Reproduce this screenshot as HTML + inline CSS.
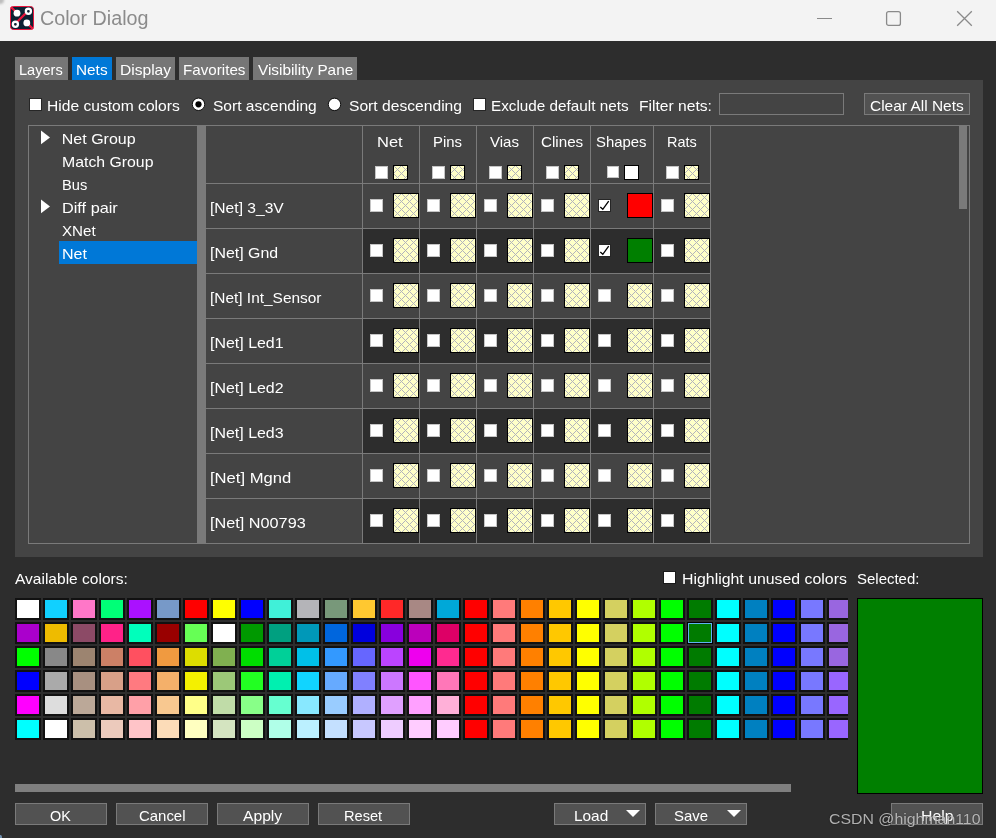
<!DOCTYPE html><html><head><meta charset="utf-8"><style>
*{margin:0;padding:0;box-sizing:border-box}
html,body{width:996px;height:838px;overflow:hidden;background:#2d2d2d;font-family:"Liberation Sans",sans-serif;color:#fff}
.a{position:absolute}
.t{position:absolute;white-space:nowrap;line-height:1;color:#fff;transform-origin:0 0}
.cb{position:absolute;width:12px;height:12px;background:#fff;border:1px solid #c4c4c4}
.hl{position:absolute;background:#7a7a7a}
.ps{position:absolute;width:26px;height:22px;border:2px solid #111}
.btn{position:absolute;height:22px;background:#525252;border:1px solid #7a7a7a}
</style></head><body>
<svg width="0" height="0" style="position:absolute"><defs><pattern id="hp" patternUnits="userSpaceOnUse" x="0" y="0" width="8" height="8"><path d="M0 0h1v1h-1zM1 1h1v1h-1zM1 7h1v1h-1zM2 2h1v1h-1zM2 6h1v1h-1zM3 3h1v1h-1zM3 5h1v1h-1zM4 4h1v1h-1zM5 3h1v1h-1zM5 5h1v1h-1zM6 2h1v1h-1zM6 6h1v1h-1zM7 1h1v1h-1zM7 7h1v1h-1z" fill="#b2b3bb"/></pattern></defs></svg>
<div class="a" style="left:0;top:0;width:996px;height:41px;background:#f3f3f3"></div>
<svg class="a" style="left:10px;top:6px" width="24" height="24" viewBox="0 0 24 24">
<rect x="0.5" y="0.5" width="23" height="23" rx="3" fill="#0d2233" stroke="#e8143c" stroke-width="1"/>
<path d="M1 1L7 7M17 6L6 17M17 17L23 23" stroke="#e8143c" stroke-width="2.4"/>
<circle cx="7" cy="7.2" r="3.4" fill="#fff"/>
<circle cx="18.4" cy="5.3" r="2.55" fill="#0d2233" stroke="#fff" stroke-width="2.3"/>
<circle cx="5.4" cy="18.3" r="2.55" fill="#0d2233" stroke="#fff" stroke-width="2.3"/>
<circle cx="16.8" cy="16.9" r="3.4" fill="#fff"/>
</svg>
<div class="a" style="left:817px;top:18px;width:15px;height:1px;background:#8a8a8a"></div>
<svg class="a" style="left:884px;top:9px" width="19" height="19" viewBox="0 0 19 19"><rect x="2.6" y="2.6" width="13.8" height="13.8" rx="2" fill="none" stroke="#8a8a8a" stroke-width="1.3"/></svg>
<svg class="a" style="left:956px;top:10px" width="17" height="17" viewBox="0 0 17 17"><path d="M1.2 1.2L15.8 15.8M15.8 1.2L1.2 15.8" stroke="#8a8a8a" stroke-width="1.3"/></svg>
<div class="a" style="left:15px;top:57px;width:53px;height:23px;background:#767676"></div>
<div class="a" style="left:72px;top:57px;width:40px;height:23px;background:#0078d7"></div>
<div class="a" style="left:116px;top:57px;width:59px;height:23px;background:#767676"></div>
<div class="a" style="left:179px;top:57px;width:70px;height:23px;background:#767676"></div>
<div class="a" style="left:253px;top:57px;width:104px;height:23px;background:#767676"></div>
<div class="a" style="left:-4px;top:-4px;width:8px;height:8px;border-radius:50%;background:#bdbdbd;filter:blur(0.8px)"></div>
<div class="a" style="left:-1.5px;top:835px;width:3px;height:6px;border-radius:50%;background:#7090b0"></div>
<div class="a" style="left:15px;top:80px;width:968px;height:477px;background:#444444"></div>
<div class="a" style="left:29px;top:98px;width:13px;height:13px;background:#fff;border:1px solid #262626"></div>
<svg class="a" style="left:190px;top:96px" width="17" height="17" viewBox="0 0 17 17"><circle cx="8.5" cy="8.3" r="6.2" fill="#fff" stroke="#000" stroke-width="0.9"/><circle cx="8.5" cy="8.3" r="3.1" fill="#000"/></svg>
<svg class="a" style="left:326px;top:96px" width="17" height="17" viewBox="0 0 17 17"><circle cx="8.5" cy="8.4" r="6.2" fill="#fff" stroke="#000" stroke-width="0.9"/></svg>
<div class="a" style="left:473px;top:98px;width:13px;height:13px;background:#fff;border:1px solid #262626"></div>
<div class="a" style="left:719px;top:93px;width:125px;height:22px;border:1px solid #7a7a7a;background:#444"></div>
<div class="btn" style="left:864px;top:93px;width:106px"></div>
<div class="a" style="left:28px;top:125px;width:942px;height:419px;border:1px solid #7a7a7a"></div>
<div class="a" style="left:59px;top:241px;width:138px;height:23px;background:#0078d7"></div>
<svg class="a" style="left:40px;top:126px" width="12" height="22" viewBox="0 0 12 22"><path d="M1 4.6L10 11.4L1 18.2z" fill="#fff"/></svg>
<svg class="a" style="left:40px;top:195px" width="12" height="22" viewBox="0 0 12 22"><path d="M1 4.6L10 11.4L1 18.2z" fill="#fff"/></svg>
<div class="a" style="left:197px;top:126px;width:9px;height:417px;background:#7a7a7a"></div>
<div class="a" style="left:363px;top:229px;width:347px;height:44px;background:#2d2d2d"></div>
<div class="a" style="left:363px;top:319px;width:347px;height:44px;background:#2d2d2d"></div>
<div class="a" style="left:363px;top:409px;width:347px;height:44px;background:#2d2d2d"></div>
<div class="a" style="left:363px;top:499px;width:347px;height:44px;background:#2d2d2d"></div>
<div class="hl" style="left:206px;top:183px;width:504px;height:1px"></div>
<div class="hl" style="left:206px;top:228px;width:504px;height:1px"></div>
<div class="hl" style="left:206px;top:273px;width:504px;height:1px"></div>
<div class="hl" style="left:206px;top:318px;width:504px;height:1px"></div>
<div class="hl" style="left:206px;top:363px;width:504px;height:1px"></div>
<div class="hl" style="left:206px;top:408px;width:504px;height:1px"></div>
<div class="hl" style="left:206px;top:453px;width:504px;height:1px"></div>
<div class="hl" style="left:206px;top:498px;width:504px;height:1px"></div>
<div class="hl" style="left:362px;top:126px;width:1px;height:417px"></div>
<div class="hl" style="left:419px;top:126px;width:1px;height:417px"></div>
<div class="hl" style="left:476px;top:126px;width:1px;height:417px"></div>
<div class="hl" style="left:533px;top:126px;width:1px;height:417px"></div>
<div class="hl" style="left:590px;top:126px;width:1px;height:417px"></div>
<div class="hl" style="left:653px;top:126px;width:1px;height:417px"></div>
<div class="hl" style="left:710px;top:126px;width:1px;height:417px"></div>
<div class="cb" style="left:375px;top:166px;width:13px;height:13px"></div>
<svg class="a" style="left:393px;top:165px" width="15" height="15" shape-rendering="crispEdges"><rect width="15" height="15" fill="#ffffc8"/><rect width="15" height="15" fill="url(#hp)"/><rect x="0.5" y="0.5" width="14" height="14" fill="none" stroke="#000"/></svg>
<div class="cb" style="left:432px;top:166px;width:13px;height:13px"></div>
<svg class="a" style="left:450px;top:165px" width="15" height="15" shape-rendering="crispEdges"><rect width="15" height="15" fill="#ffffc8"/><rect width="15" height="15" fill="url(#hp)"/><rect x="0.5" y="0.5" width="14" height="14" fill="none" stroke="#000"/></svg>
<div class="cb" style="left:489px;top:166px;width:13px;height:13px"></div>
<svg class="a" style="left:507px;top:165px" width="15" height="15" shape-rendering="crispEdges"><rect width="15" height="15" fill="#ffffc8"/><rect width="15" height="15" fill="url(#hp)"/><rect x="0.5" y="0.5" width="14" height="14" fill="none" stroke="#000"/></svg>
<div class="cb" style="left:546px;top:166px;width:13px;height:13px"></div>
<svg class="a" style="left:564px;top:165px" width="15" height="15" shape-rendering="crispEdges"><rect width="15" height="15" fill="#ffffc8"/><rect width="15" height="15" fill="url(#hp)"/><rect x="0.5" y="0.5" width="14" height="14" fill="none" stroke="#000"/></svg>
<div class="cb" style="left:607px;top:166px;width:12px;height:12px"></div>
<div class="a" style="left:624px;top:165px;width:15px;height:15px;border:1px solid #000;background:#fff"></div>
<div class="cb" style="left:666px;top:166px;width:13px;height:13px"></div>
<svg class="a" style="left:684px;top:165px" width="15" height="15" shape-rendering="crispEdges"><rect width="15" height="15" fill="#ffffc8"/><rect width="15" height="15" fill="url(#hp)"/><rect x="0.5" y="0.5" width="14" height="14" fill="none" stroke="#000"/></svg>
<div class="cb" style="left:370px;top:199px;width:13px;height:13px"></div>
<svg class="a" style="left:393px;top:193px" width="26" height="25" shape-rendering="crispEdges"><rect width="26" height="25" fill="#ffffc8"/><rect width="26" height="25" fill="url(#hp)"/><rect x="0.5" y="0.5" width="25" height="24" fill="none" stroke="#000"/></svg>
<div class="cb" style="left:427px;top:199px;width:13px;height:13px"></div>
<svg class="a" style="left:450px;top:193px" width="26" height="25" shape-rendering="crispEdges"><rect width="26" height="25" fill="#ffffc8"/><rect width="26" height="25" fill="url(#hp)"/><rect x="0.5" y="0.5" width="25" height="24" fill="none" stroke="#000"/></svg>
<div class="cb" style="left:484px;top:199px;width:13px;height:13px"></div>
<svg class="a" style="left:507px;top:193px" width="26" height="25" shape-rendering="crispEdges"><rect width="26" height="25" fill="#ffffc8"/><rect width="26" height="25" fill="url(#hp)"/><rect x="0.5" y="0.5" width="25" height="24" fill="none" stroke="#000"/></svg>
<div class="cb" style="left:541px;top:199px;width:13px;height:13px"></div>
<svg class="a" style="left:564px;top:193px" width="26" height="25" shape-rendering="crispEdges"><rect width="26" height="25" fill="#ffffc8"/><rect width="26" height="25" fill="url(#hp)"/><rect x="0.5" y="0.5" width="25" height="24" fill="none" stroke="#000"/></svg>
<div class="a" style="left:598px;top:199px;width:13px;height:13px;background:#fff;border:1px solid #262626"></div>
<svg class="a" style="left:598px;top:199px" width="12" height="13" viewBox="0 0 12 13"><path d="M2.3 8.1L4.8 10.3L10.7 2.2" fill="none" stroke="#000" stroke-width="1.35"/></svg>
<div class="a" style="left:627px;top:193px;width:26px;height:25px;border:1px solid #000;background:#ff0000"></div>
<div class="cb" style="left:661px;top:199px;width:13px;height:13px"></div>
<svg class="a" style="left:684px;top:193px" width="26" height="25" shape-rendering="crispEdges"><rect width="26" height="25" fill="#ffffc8"/><rect width="26" height="25" fill="url(#hp)"/><rect x="0.5" y="0.5" width="25" height="24" fill="none" stroke="#000"/></svg>
<div class="cb" style="left:370px;top:244px;width:13px;height:13px"></div>
<svg class="a" style="left:393px;top:238px" width="26" height="25" shape-rendering="crispEdges"><rect width="26" height="25" fill="#ffffc8"/><rect width="26" height="25" fill="url(#hp)"/><rect x="0.5" y="0.5" width="25" height="24" fill="none" stroke="#000"/></svg>
<div class="cb" style="left:427px;top:244px;width:13px;height:13px"></div>
<svg class="a" style="left:450px;top:238px" width="26" height="25" shape-rendering="crispEdges"><rect width="26" height="25" fill="#ffffc8"/><rect width="26" height="25" fill="url(#hp)"/><rect x="0.5" y="0.5" width="25" height="24" fill="none" stroke="#000"/></svg>
<div class="cb" style="left:484px;top:244px;width:13px;height:13px"></div>
<svg class="a" style="left:507px;top:238px" width="26" height="25" shape-rendering="crispEdges"><rect width="26" height="25" fill="#ffffc8"/><rect width="26" height="25" fill="url(#hp)"/><rect x="0.5" y="0.5" width="25" height="24" fill="none" stroke="#000"/></svg>
<div class="cb" style="left:541px;top:244px;width:13px;height:13px"></div>
<svg class="a" style="left:564px;top:238px" width="26" height="25" shape-rendering="crispEdges"><rect width="26" height="25" fill="#ffffc8"/><rect width="26" height="25" fill="url(#hp)"/><rect x="0.5" y="0.5" width="25" height="24" fill="none" stroke="#000"/></svg>
<div class="a" style="left:598px;top:244px;width:13px;height:13px;background:#fff;border:1px solid #262626"></div>
<svg class="a" style="left:598px;top:244px" width="12" height="13" viewBox="0 0 12 13"><path d="M2.3 8.1L4.8 10.3L10.7 2.2" fill="none" stroke="#000" stroke-width="1.35"/></svg>
<div class="a" style="left:627px;top:238px;width:26px;height:25px;border:1px solid #000;background:#007f00"></div>
<div class="cb" style="left:661px;top:244px;width:13px;height:13px"></div>
<svg class="a" style="left:684px;top:238px" width="26" height="25" shape-rendering="crispEdges"><rect width="26" height="25" fill="#ffffc8"/><rect width="26" height="25" fill="url(#hp)"/><rect x="0.5" y="0.5" width="25" height="24" fill="none" stroke="#000"/></svg>
<div class="cb" style="left:370px;top:289px;width:13px;height:13px"></div>
<svg class="a" style="left:393px;top:283px" width="26" height="25" shape-rendering="crispEdges"><rect width="26" height="25" fill="#ffffc8"/><rect width="26" height="25" fill="url(#hp)"/><rect x="0.5" y="0.5" width="25" height="24" fill="none" stroke="#000"/></svg>
<div class="cb" style="left:427px;top:289px;width:13px;height:13px"></div>
<svg class="a" style="left:450px;top:283px" width="26" height="25" shape-rendering="crispEdges"><rect width="26" height="25" fill="#ffffc8"/><rect width="26" height="25" fill="url(#hp)"/><rect x="0.5" y="0.5" width="25" height="24" fill="none" stroke="#000"/></svg>
<div class="cb" style="left:484px;top:289px;width:13px;height:13px"></div>
<svg class="a" style="left:507px;top:283px" width="26" height="25" shape-rendering="crispEdges"><rect width="26" height="25" fill="#ffffc8"/><rect width="26" height="25" fill="url(#hp)"/><rect x="0.5" y="0.5" width="25" height="24" fill="none" stroke="#000"/></svg>
<div class="cb" style="left:541px;top:289px;width:13px;height:13px"></div>
<svg class="a" style="left:564px;top:283px" width="26" height="25" shape-rendering="crispEdges"><rect width="26" height="25" fill="#ffffc8"/><rect width="26" height="25" fill="url(#hp)"/><rect x="0.5" y="0.5" width="25" height="24" fill="none" stroke="#000"/></svg>
<div class="cb" style="left:598px;top:289px;width:13px;height:13px"></div>
<svg class="a" style="left:627px;top:283px" width="26" height="25" shape-rendering="crispEdges"><rect width="26" height="25" fill="#ffffc8"/><rect width="26" height="25" fill="url(#hp)"/><rect x="0.5" y="0.5" width="25" height="24" fill="none" stroke="#000"/></svg>
<div class="cb" style="left:661px;top:289px;width:13px;height:13px"></div>
<svg class="a" style="left:684px;top:283px" width="26" height="25" shape-rendering="crispEdges"><rect width="26" height="25" fill="#ffffc8"/><rect width="26" height="25" fill="url(#hp)"/><rect x="0.5" y="0.5" width="25" height="24" fill="none" stroke="#000"/></svg>
<div class="cb" style="left:370px;top:334px;width:13px;height:13px"></div>
<svg class="a" style="left:393px;top:328px" width="26" height="25" shape-rendering="crispEdges"><rect width="26" height="25" fill="#ffffc8"/><rect width="26" height="25" fill="url(#hp)"/><rect x="0.5" y="0.5" width="25" height="24" fill="none" stroke="#000"/></svg>
<div class="cb" style="left:427px;top:334px;width:13px;height:13px"></div>
<svg class="a" style="left:450px;top:328px" width="26" height="25" shape-rendering="crispEdges"><rect width="26" height="25" fill="#ffffc8"/><rect width="26" height="25" fill="url(#hp)"/><rect x="0.5" y="0.5" width="25" height="24" fill="none" stroke="#000"/></svg>
<div class="cb" style="left:484px;top:334px;width:13px;height:13px"></div>
<svg class="a" style="left:507px;top:328px" width="26" height="25" shape-rendering="crispEdges"><rect width="26" height="25" fill="#ffffc8"/><rect width="26" height="25" fill="url(#hp)"/><rect x="0.5" y="0.5" width="25" height="24" fill="none" stroke="#000"/></svg>
<div class="cb" style="left:541px;top:334px;width:13px;height:13px"></div>
<svg class="a" style="left:564px;top:328px" width="26" height="25" shape-rendering="crispEdges"><rect width="26" height="25" fill="#ffffc8"/><rect width="26" height="25" fill="url(#hp)"/><rect x="0.5" y="0.5" width="25" height="24" fill="none" stroke="#000"/></svg>
<div class="cb" style="left:598px;top:334px;width:13px;height:13px"></div>
<svg class="a" style="left:627px;top:328px" width="26" height="25" shape-rendering="crispEdges"><rect width="26" height="25" fill="#ffffc8"/><rect width="26" height="25" fill="url(#hp)"/><rect x="0.5" y="0.5" width="25" height="24" fill="none" stroke="#000"/></svg>
<div class="cb" style="left:661px;top:334px;width:13px;height:13px"></div>
<svg class="a" style="left:684px;top:328px" width="26" height="25" shape-rendering="crispEdges"><rect width="26" height="25" fill="#ffffc8"/><rect width="26" height="25" fill="url(#hp)"/><rect x="0.5" y="0.5" width="25" height="24" fill="none" stroke="#000"/></svg>
<div class="cb" style="left:370px;top:379px;width:13px;height:13px"></div>
<svg class="a" style="left:393px;top:373px" width="26" height="25" shape-rendering="crispEdges"><rect width="26" height="25" fill="#ffffc8"/><rect width="26" height="25" fill="url(#hp)"/><rect x="0.5" y="0.5" width="25" height="24" fill="none" stroke="#000"/></svg>
<div class="cb" style="left:427px;top:379px;width:13px;height:13px"></div>
<svg class="a" style="left:450px;top:373px" width="26" height="25" shape-rendering="crispEdges"><rect width="26" height="25" fill="#ffffc8"/><rect width="26" height="25" fill="url(#hp)"/><rect x="0.5" y="0.5" width="25" height="24" fill="none" stroke="#000"/></svg>
<div class="cb" style="left:484px;top:379px;width:13px;height:13px"></div>
<svg class="a" style="left:507px;top:373px" width="26" height="25" shape-rendering="crispEdges"><rect width="26" height="25" fill="#ffffc8"/><rect width="26" height="25" fill="url(#hp)"/><rect x="0.5" y="0.5" width="25" height="24" fill="none" stroke="#000"/></svg>
<div class="cb" style="left:541px;top:379px;width:13px;height:13px"></div>
<svg class="a" style="left:564px;top:373px" width="26" height="25" shape-rendering="crispEdges"><rect width="26" height="25" fill="#ffffc8"/><rect width="26" height="25" fill="url(#hp)"/><rect x="0.5" y="0.5" width="25" height="24" fill="none" stroke="#000"/></svg>
<div class="cb" style="left:598px;top:379px;width:13px;height:13px"></div>
<svg class="a" style="left:627px;top:373px" width="26" height="25" shape-rendering="crispEdges"><rect width="26" height="25" fill="#ffffc8"/><rect width="26" height="25" fill="url(#hp)"/><rect x="0.5" y="0.5" width="25" height="24" fill="none" stroke="#000"/></svg>
<div class="cb" style="left:661px;top:379px;width:13px;height:13px"></div>
<svg class="a" style="left:684px;top:373px" width="26" height="25" shape-rendering="crispEdges"><rect width="26" height="25" fill="#ffffc8"/><rect width="26" height="25" fill="url(#hp)"/><rect x="0.5" y="0.5" width="25" height="24" fill="none" stroke="#000"/></svg>
<div class="cb" style="left:370px;top:424px;width:13px;height:13px"></div>
<svg class="a" style="left:393px;top:418px" width="26" height="25" shape-rendering="crispEdges"><rect width="26" height="25" fill="#ffffc8"/><rect width="26" height="25" fill="url(#hp)"/><rect x="0.5" y="0.5" width="25" height="24" fill="none" stroke="#000"/></svg>
<div class="cb" style="left:427px;top:424px;width:13px;height:13px"></div>
<svg class="a" style="left:450px;top:418px" width="26" height="25" shape-rendering="crispEdges"><rect width="26" height="25" fill="#ffffc8"/><rect width="26" height="25" fill="url(#hp)"/><rect x="0.5" y="0.5" width="25" height="24" fill="none" stroke="#000"/></svg>
<div class="cb" style="left:484px;top:424px;width:13px;height:13px"></div>
<svg class="a" style="left:507px;top:418px" width="26" height="25" shape-rendering="crispEdges"><rect width="26" height="25" fill="#ffffc8"/><rect width="26" height="25" fill="url(#hp)"/><rect x="0.5" y="0.5" width="25" height="24" fill="none" stroke="#000"/></svg>
<div class="cb" style="left:541px;top:424px;width:13px;height:13px"></div>
<svg class="a" style="left:564px;top:418px" width="26" height="25" shape-rendering="crispEdges"><rect width="26" height="25" fill="#ffffc8"/><rect width="26" height="25" fill="url(#hp)"/><rect x="0.5" y="0.5" width="25" height="24" fill="none" stroke="#000"/></svg>
<div class="cb" style="left:598px;top:424px;width:13px;height:13px"></div>
<svg class="a" style="left:627px;top:418px" width="26" height="25" shape-rendering="crispEdges"><rect width="26" height="25" fill="#ffffc8"/><rect width="26" height="25" fill="url(#hp)"/><rect x="0.5" y="0.5" width="25" height="24" fill="none" stroke="#000"/></svg>
<div class="cb" style="left:661px;top:424px;width:13px;height:13px"></div>
<svg class="a" style="left:684px;top:418px" width="26" height="25" shape-rendering="crispEdges"><rect width="26" height="25" fill="#ffffc8"/><rect width="26" height="25" fill="url(#hp)"/><rect x="0.5" y="0.5" width="25" height="24" fill="none" stroke="#000"/></svg>
<div class="cb" style="left:370px;top:469px;width:13px;height:13px"></div>
<svg class="a" style="left:393px;top:463px" width="26" height="25" shape-rendering="crispEdges"><rect width="26" height="25" fill="#ffffc8"/><rect width="26" height="25" fill="url(#hp)"/><rect x="0.5" y="0.5" width="25" height="24" fill="none" stroke="#000"/></svg>
<div class="cb" style="left:427px;top:469px;width:13px;height:13px"></div>
<svg class="a" style="left:450px;top:463px" width="26" height="25" shape-rendering="crispEdges"><rect width="26" height="25" fill="#ffffc8"/><rect width="26" height="25" fill="url(#hp)"/><rect x="0.5" y="0.5" width="25" height="24" fill="none" stroke="#000"/></svg>
<div class="cb" style="left:484px;top:469px;width:13px;height:13px"></div>
<svg class="a" style="left:507px;top:463px" width="26" height="25" shape-rendering="crispEdges"><rect width="26" height="25" fill="#ffffc8"/><rect width="26" height="25" fill="url(#hp)"/><rect x="0.5" y="0.5" width="25" height="24" fill="none" stroke="#000"/></svg>
<div class="cb" style="left:541px;top:469px;width:13px;height:13px"></div>
<svg class="a" style="left:564px;top:463px" width="26" height="25" shape-rendering="crispEdges"><rect width="26" height="25" fill="#ffffc8"/><rect width="26" height="25" fill="url(#hp)"/><rect x="0.5" y="0.5" width="25" height="24" fill="none" stroke="#000"/></svg>
<div class="cb" style="left:598px;top:469px;width:13px;height:13px"></div>
<svg class="a" style="left:627px;top:463px" width="26" height="25" shape-rendering="crispEdges"><rect width="26" height="25" fill="#ffffc8"/><rect width="26" height="25" fill="url(#hp)"/><rect x="0.5" y="0.5" width="25" height="24" fill="none" stroke="#000"/></svg>
<div class="cb" style="left:661px;top:469px;width:13px;height:13px"></div>
<svg class="a" style="left:684px;top:463px" width="26" height="25" shape-rendering="crispEdges"><rect width="26" height="25" fill="#ffffc8"/><rect width="26" height="25" fill="url(#hp)"/><rect x="0.5" y="0.5" width="25" height="24" fill="none" stroke="#000"/></svg>
<div class="cb" style="left:370px;top:514px;width:13px;height:13px"></div>
<svg class="a" style="left:393px;top:508px" width="26" height="25" shape-rendering="crispEdges"><rect width="26" height="25" fill="#ffffc8"/><rect width="26" height="25" fill="url(#hp)"/><rect x="0.5" y="0.5" width="25" height="24" fill="none" stroke="#000"/></svg>
<div class="cb" style="left:427px;top:514px;width:13px;height:13px"></div>
<svg class="a" style="left:450px;top:508px" width="26" height="25" shape-rendering="crispEdges"><rect width="26" height="25" fill="#ffffc8"/><rect width="26" height="25" fill="url(#hp)"/><rect x="0.5" y="0.5" width="25" height="24" fill="none" stroke="#000"/></svg>
<div class="cb" style="left:484px;top:514px;width:13px;height:13px"></div>
<svg class="a" style="left:507px;top:508px" width="26" height="25" shape-rendering="crispEdges"><rect width="26" height="25" fill="#ffffc8"/><rect width="26" height="25" fill="url(#hp)"/><rect x="0.5" y="0.5" width="25" height="24" fill="none" stroke="#000"/></svg>
<div class="cb" style="left:541px;top:514px;width:13px;height:13px"></div>
<svg class="a" style="left:564px;top:508px" width="26" height="25" shape-rendering="crispEdges"><rect width="26" height="25" fill="#ffffc8"/><rect width="26" height="25" fill="url(#hp)"/><rect x="0.5" y="0.5" width="25" height="24" fill="none" stroke="#000"/></svg>
<div class="cb" style="left:598px;top:514px;width:13px;height:13px"></div>
<svg class="a" style="left:627px;top:508px" width="26" height="25" shape-rendering="crispEdges"><rect width="26" height="25" fill="#ffffc8"/><rect width="26" height="25" fill="url(#hp)"/><rect x="0.5" y="0.5" width="25" height="24" fill="none" stroke="#000"/></svg>
<div class="cb" style="left:661px;top:514px;width:13px;height:13px"></div>
<svg class="a" style="left:684px;top:508px" width="26" height="25" shape-rendering="crispEdges"><rect width="26" height="25" fill="#ffffc8"/><rect width="26" height="25" fill="url(#hp)"/><rect x="0.5" y="0.5" width="25" height="24" fill="none" stroke="#000"/></svg>
<div class="a" style="left:959px;top:126px;width:8px;height:83px;background:#7a7a7a"></div>
<div class="a" style="left:663px;top:571px;width:13px;height:13px;background:#fff;border:1px solid #1a1a1a"></div>
<div class="a" style="left:15px;top:598px;width:833px;height:144px;overflow:hidden">
<div class="ps" style="left:0px;top:0px;background:#ffffff"></div>
<div class="ps" style="left:28px;top:0px;background:#11d0ff"></div>
<div class="ps" style="left:56px;top:0px;background:#ff77c8"></div>
<div class="ps" style="left:84px;top:0px;background:#00ff77"></div>
<div class="ps" style="left:112px;top:0px;background:#aa11ff"></div>
<div class="ps" style="left:140px;top:0px;background:#7799c8"></div>
<div class="ps" style="left:168px;top:0px;background:#ff0000"></div>
<div class="ps" style="left:196px;top:0px;background:#ffff00"></div>
<div class="ps" style="left:224px;top:0px;background:#0000ff"></div>
<div class="ps" style="left:252px;top:0px;background:#40f0d8"></div>
<div class="ps" style="left:280px;top:0px;background:#b4b4b8"></div>
<div class="ps" style="left:308px;top:0px;background:#78987a"></div>
<div class="ps" style="left:336px;top:0px;background:#ffc830"></div>
<div class="ps" style="left:364px;top:0px;background:#ff2828"></div>
<div class="ps" style="left:392px;top:0px;background:#a88884"></div>
<div class="ps" style="left:420px;top:0px;background:#00a8d8"></div>
<div class="ps" style="left:448px;top:0px;background:#ff0000"></div>
<div class="ps" style="left:476px;top:0px;background:#ff7a7a"></div>
<div class="ps" style="left:504px;top:0px;background:#ff8000"></div>
<div class="ps" style="left:532px;top:0px;background:#ffc800"></div>
<div class="ps" style="left:560px;top:0px;background:#ffff00"></div>
<div class="ps" style="left:588px;top:0px;background:#d4d060"></div>
<div class="ps" style="left:616px;top:0px;background:#b0ff00"></div>
<div class="ps" style="left:644px;top:0px;background:#00ff00"></div>
<div class="ps" style="left:672px;top:0px;background:#007b00"></div>
<div class="ps" style="left:700px;top:0px;background:#00ffff"></div>
<div class="ps" style="left:728px;top:0px;background:#0080c0"></div>
<div class="ps" style="left:756px;top:0px;background:#0000ff"></div>
<div class="ps" style="left:784px;top:0px;background:#7878ff"></div>
<div class="ps" style="left:812px;top:0px;background:#9966e0"></div>
<div class="ps" style="left:0px;top:24px;background:#aa00cc"></div>
<div class="ps" style="left:28px;top:24px;background:#eebb00"></div>
<div class="ps" style="left:56px;top:24px;background:#8c4a66"></div>
<div class="ps" style="left:84px;top:24px;background:#ff2288"></div>
<div class="ps" style="left:112px;top:24px;background:#00ffbb"></div>
<div class="ps" style="left:140px;top:24px;background:#990000"></div>
<div class="ps" style="left:168px;top:24px;background:#66ff55"></div>
<div class="ps" style="left:196px;top:24px;background:#ffffff"></div>
<div class="ps" style="left:224px;top:24px;background:#009900"></div>
<div class="ps" style="left:252px;top:24px;background:#00a080"></div>
<div class="ps" style="left:280px;top:24px;background:#0098b8"></div>
<div class="ps" style="left:308px;top:24px;background:#0066dd"></div>
<div class="ps" style="left:336px;top:24px;background:#0000dd"></div>
<div class="ps" style="left:364px;top:24px;background:#8800dd"></div>
<div class="ps" style="left:392px;top:24px;background:#bb00bb"></div>
<div class="ps" style="left:420px;top:24px;background:#dd0066"></div>
<div class="ps" style="left:448px;top:24px;background:#ff0000"></div>
<div class="ps" style="left:476px;top:24px;background:#ff7a7a"></div>
<div class="ps" style="left:504px;top:24px;background:#ff8000"></div>
<div class="ps" style="left:532px;top:24px;background:#ffc800"></div>
<div class="ps" style="left:560px;top:24px;background:#ffff00"></div>
<div class="ps" style="left:588px;top:24px;background:#d4d060"></div>
<div class="ps" style="left:616px;top:24px;background:#b0ff00"></div>
<div class="ps" style="left:644px;top:24px;background:#00ff00"></div>
<div class="ps" style="left:672px;top:24px;background:#007b00;border:1px solid #000;box-shadow:inset 0 0 0 1px #5eb2f0"></div>
<div class="ps" style="left:700px;top:24px;background:#00ffff"></div>
<div class="ps" style="left:728px;top:24px;background:#0080c0"></div>
<div class="ps" style="left:756px;top:24px;background:#0000ff"></div>
<div class="ps" style="left:784px;top:24px;background:#7878ff"></div>
<div class="ps" style="left:812px;top:24px;background:#9966e0"></div>
<div class="ps" style="left:0px;top:48px;background:#00ff00"></div>
<div class="ps" style="left:28px;top:48px;background:#888888"></div>
<div class="ps" style="left:56px;top:48px;background:#9c8470"></div>
<div class="ps" style="left:84px;top:48px;background:#cc8066"></div>
<div class="ps" style="left:112px;top:48px;background:#ff5060"></div>
<div class="ps" style="left:140px;top:48px;background:#f09a40"></div>
<div class="ps" style="left:168px;top:48px;background:#dddd00"></div>
<div class="ps" style="left:196px;top:48px;background:#80b050"></div>
<div class="ps" style="left:224px;top:48px;background:#00dd00"></div>
<div class="ps" style="left:252px;top:48px;background:#00d098"></div>
<div class="ps" style="left:280px;top:48px;background:#00c0e8"></div>
<div class="ps" style="left:308px;top:48px;background:#3399ff"></div>
<div class="ps" style="left:336px;top:48px;background:#6666ff"></div>
<div class="ps" style="left:364px;top:48px;background:#bb44ff"></div>
<div class="ps" style="left:392px;top:48px;background:#ee00ee"></div>
<div class="ps" style="left:420px;top:48px;background:#ff2a90"></div>
<div class="ps" style="left:448px;top:48px;background:#ff0000"></div>
<div class="ps" style="left:476px;top:48px;background:#ff7a7a"></div>
<div class="ps" style="left:504px;top:48px;background:#ff8000"></div>
<div class="ps" style="left:532px;top:48px;background:#ffc800"></div>
<div class="ps" style="left:560px;top:48px;background:#ffff00"></div>
<div class="ps" style="left:588px;top:48px;background:#d4d060"></div>
<div class="ps" style="left:616px;top:48px;background:#b0ff00"></div>
<div class="ps" style="left:644px;top:48px;background:#00ff00"></div>
<div class="ps" style="left:672px;top:48px;background:#007b00"></div>
<div class="ps" style="left:700px;top:48px;background:#00ffff"></div>
<div class="ps" style="left:728px;top:48px;background:#0080c0"></div>
<div class="ps" style="left:756px;top:48px;background:#0000ff"></div>
<div class="ps" style="left:784px;top:48px;background:#7878ff"></div>
<div class="ps" style="left:812px;top:48px;background:#9966e0"></div>
<div class="ps" style="left:0px;top:72px;background:#0000ff"></div>
<div class="ps" style="left:28px;top:72px;background:#aaaaaa"></div>
<div class="ps" style="left:56px;top:72px;background:#a89080"></div>
<div class="ps" style="left:84px;top:72px;background:#d8a088"></div>
<div class="ps" style="left:112px;top:72px;background:#ff7a80"></div>
<div class="ps" style="left:140px;top:72px;background:#f4b06a"></div>
<div class="ps" style="left:168px;top:72px;background:#f4f000"></div>
<div class="ps" style="left:196px;top:72px;background:#9cc878"></div>
<div class="ps" style="left:224px;top:72px;background:#22ff22"></div>
<div class="ps" style="left:252px;top:72px;background:#00f0b0"></div>
<div class="ps" style="left:280px;top:72px;background:#11d4ff"></div>
<div class="ps" style="left:308px;top:72px;background:#66aaff"></div>
<div class="ps" style="left:336px;top:72px;background:#8080ff"></div>
<div class="ps" style="left:364px;top:72px;background:#cc77ff"></div>
<div class="ps" style="left:392px;top:72px;background:#ff55ff"></div>
<div class="ps" style="left:420px;top:72px;background:#ff77b8"></div>
<div class="ps" style="left:448px;top:72px;background:#ff0000"></div>
<div class="ps" style="left:476px;top:72px;background:#ff7a7a"></div>
<div class="ps" style="left:504px;top:72px;background:#ff8000"></div>
<div class="ps" style="left:532px;top:72px;background:#ffc800"></div>
<div class="ps" style="left:560px;top:72px;background:#ffff00"></div>
<div class="ps" style="left:588px;top:72px;background:#d4d060"></div>
<div class="ps" style="left:616px;top:72px;background:#b0ff00"></div>
<div class="ps" style="left:644px;top:72px;background:#00ff00"></div>
<div class="ps" style="left:672px;top:72px;background:#007b00"></div>
<div class="ps" style="left:700px;top:72px;background:#00ffff"></div>
<div class="ps" style="left:728px;top:72px;background:#0080c0"></div>
<div class="ps" style="left:756px;top:72px;background:#0000ff"></div>
<div class="ps" style="left:784px;top:72px;background:#7878ff"></div>
<div class="ps" style="left:812px;top:72px;background:#9966ff"></div>
<div class="ps" style="left:0px;top:96px;background:#ff00ff"></div>
<div class="ps" style="left:28px;top:96px;background:#dddddd"></div>
<div class="ps" style="left:56px;top:96px;background:#bba898"></div>
<div class="ps" style="left:84px;top:96px;background:#e8b8a4"></div>
<div class="ps" style="left:112px;top:96px;background:#ffa0a8"></div>
<div class="ps" style="left:140px;top:96px;background:#f8c890"></div>
<div class="ps" style="left:168px;top:96px;background:#ffff88"></div>
<div class="ps" style="left:196px;top:96px;background:#c0dca8"></div>
<div class="ps" style="left:224px;top:96px;background:#88ff88"></div>
<div class="ps" style="left:252px;top:96px;background:#66ffd0"></div>
<div class="ps" style="left:280px;top:96px;background:#88e8ff"></div>
<div class="ps" style="left:308px;top:96px;background:#99ccff"></div>
<div class="ps" style="left:336px;top:96px;background:#b0b0ff"></div>
<div class="ps" style="left:364px;top:96px;background:#e0a0ff"></div>
<div class="ps" style="left:392px;top:96px;background:#ffa0ff"></div>
<div class="ps" style="left:420px;top:96px;background:#ffb0d8"></div>
<div class="ps" style="left:448px;top:96px;background:#ff0000"></div>
<div class="ps" style="left:476px;top:96px;background:#ff7a7a"></div>
<div class="ps" style="left:504px;top:96px;background:#ff8000"></div>
<div class="ps" style="left:532px;top:96px;background:#ffc800"></div>
<div class="ps" style="left:560px;top:96px;background:#ffff00"></div>
<div class="ps" style="left:588px;top:96px;background:#d4d060"></div>
<div class="ps" style="left:616px;top:96px;background:#b0ff00"></div>
<div class="ps" style="left:644px;top:96px;background:#00ff00"></div>
<div class="ps" style="left:672px;top:96px;background:#007b00"></div>
<div class="ps" style="left:700px;top:96px;background:#00ffff"></div>
<div class="ps" style="left:728px;top:96px;background:#0080c0"></div>
<div class="ps" style="left:756px;top:96px;background:#0000ff"></div>
<div class="ps" style="left:784px;top:96px;background:#7878ff"></div>
<div class="ps" style="left:812px;top:96px;background:#9966ff"></div>
<div class="ps" style="left:0px;top:120px;background:#00ffff"></div>
<div class="ps" style="left:28px;top:120px;background:#ffffff"></div>
<div class="ps" style="left:56px;top:120px;background:#ccbfaa"></div>
<div class="ps" style="left:84px;top:120px;background:#eccabc"></div>
<div class="ps" style="left:112px;top:120px;background:#ffc4c8"></div>
<div class="ps" style="left:140px;top:120px;background:#fcdcb8"></div>
<div class="ps" style="left:168px;top:120px;background:#ffffc0"></div>
<div class="ps" style="left:196px;top:120px;background:#d4e4c0"></div>
<div class="ps" style="left:224px;top:120px;background:#ccffc4"></div>
<div class="ps" style="left:252px;top:120px;background:#b0ffe8"></div>
<div class="ps" style="left:280px;top:120px;background:#bbf0ff"></div>
<div class="ps" style="left:308px;top:120px;background:#c4e0ff"></div>
<div class="ps" style="left:336px;top:120px;background:#c8c8ff"></div>
<div class="ps" style="left:364px;top:120px;background:#eeccff"></div>
<div class="ps" style="left:392px;top:120px;background:#ffccff"></div>
<div class="ps" style="left:420px;top:120px;background:#ffccff"></div>
<div class="ps" style="left:448px;top:120px;background:#ff0000"></div>
<div class="ps" style="left:476px;top:120px;background:#ff7a7a"></div>
<div class="ps" style="left:504px;top:120px;background:#ff8000"></div>
<div class="ps" style="left:532px;top:120px;background:#ffc800"></div>
<div class="ps" style="left:560px;top:120px;background:#ffff00"></div>
<div class="ps" style="left:588px;top:120px;background:#d4d060"></div>
<div class="ps" style="left:616px;top:120px;background:#b0ff00"></div>
<div class="ps" style="left:644px;top:120px;background:#00ff00"></div>
<div class="ps" style="left:672px;top:120px;background:#007b00"></div>
<div class="ps" style="left:700px;top:120px;background:#00ffff"></div>
<div class="ps" style="left:728px;top:120px;background:#0080c0"></div>
<div class="ps" style="left:756px;top:120px;background:#0000ff"></div>
<div class="ps" style="left:784px;top:120px;background:#7878ff"></div>
<div class="ps" style="left:812px;top:120px;background:#9966ff"></div>
</div>
<div class="a" style="left:857px;top:598px;width:126px;height:196px;border:1px solid #000;background:#007f00"></div>
<div class="a" style="left:15px;top:784px;width:776px;height:8px;background:#7f7f7f"></div>
<div class="btn" style="left:15px;top:803px;width:92px"></div>
<div class="btn" style="left:116px;top:803px;width:92px"></div>
<div class="btn" style="left:217px;top:803px;width:92px"></div>
<div class="btn" style="left:318px;top:803px;width:92px"></div>
<div class="btn" style="left:554px;top:803px;width:92px"></div>
<div class="a" style="left:626px;top:810px;width:0;height:0;border-left:7px solid transparent;border-right:7px solid transparent;border-top:7px solid #fff"></div>
<div class="btn" style="left:655px;top:803px;width:92px"></div>
<div class="a" style="left:727px;top:810px;width:0;height:0;border-left:7px solid transparent;border-right:7px solid transparent;border-top:7px solid #fff"></div>
<div class="btn" style="left:891px;top:803px;width:92px"></div>
<div class="t" style="left:39.58px;top:9px;font-size:19.4px;transform-origin:0 16px;transform:scale(1.0171,1.0);color:#8b8b8b">Color Dialog</div>
<div class="t" style="left:19.29px;top:62px;font-size:16px;transform-origin:0 13px;transform:scale(0.9106,0.97);">Layers</div>
<div class="t" style="left:75.94px;top:62px;font-size:16px;transform-origin:0 13px;transform:scale(0.9594,0.97);">Nets</div>
<div class="t" style="left:119.93px;top:62px;font-size:16px;transform-origin:0 13px;transform:scale(0.9725,0.97);">Display</div>
<div class="t" style="left:182.55px;top:62px;font-size:16px;transform-origin:0 13px;transform:scale(0.9484,0.97);">Favorites</div>
<div class="t" style="left:257.70px;top:62px;font-size:16px;transform-origin:0 13px;transform:scale(0.9586,0.97);">Visibility Pane</div>
<div class="t" style="left:47.32px;top:98px;font-size:16px;transform-origin:0 13px;transform:scale(0.9756,0.97);">Hide custom colors</div>
<div class="t" style="left:213.03px;top:98px;font-size:16px;transform-origin:0 13px;transform:scale(0.9714,0.97);">Sort ascending</div>
<div class="t" style="left:349.22px;top:98px;font-size:16px;transform-origin:0 13px;transform:scale(0.9772,0.97);">Sort descending</div>
<div class="t" style="left:491.34px;top:98px;font-size:16px;transform-origin:0 13px;transform:scale(0.9552,0.97);">Exclude default nets</div>
<div class="t" style="left:638.72px;top:98px;font-size:16px;transform-origin:0 13px;transform:scale(0.9764,0.97);">Filter nets:</div>
<div class="t" style="left:869.63px;top:98px;font-size:16px;transform-origin:0 13px;transform:scale(0.9667,0.97);">Clear All Nets</div>
<div class="t" style="left:61.80px;top:131px;font-size:16px;transform-origin:0 13px;transform:scale(1.0000,0.97);">Net Group</div>
<div class="t" style="left:61.81px;top:154px;font-size:16px;transform-origin:0 13px;transform:scale(0.9890,0.97);">Match Group</div>
<div class="t" style="left:61.88px;top:177px;font-size:16px;transform-origin:0 13px;transform:scale(0.9154,0.97);">Bus</div>
<div class="t" style="left:61.78px;top:200px;font-size:16px;transform-origin:0 13px;transform:scale(1.0167,0.97);">Diff pair</div>
<div class="t" style="left:61.85px;top:223px;font-size:16px;transform-origin:0 13px;transform:scale(0.9486,0.97);">XNet</div>
<div class="t" style="left:61.80px;top:246px;font-size:16px;transform-origin:0 13px;transform:scale(1.0042,0.97);">Net</div>
<div class="t" style="left:377.37px;top:134px;font-size:16px;transform-origin:0 13px;transform:scale(1.0292,0.97);">Net</div>
<div class="t" style="left:432.67px;top:134px;font-size:16px;transform-origin:0 13px;transform:scale(0.9300,0.97);">Pins</div>
<div class="t" style="left:490.40px;top:134px;font-size:16px;transform-origin:0 13px;transform:scale(0.9400,0.97);">Vias</div>
<div class="t" style="left:540.75px;top:134px;font-size:16px;transform-origin:0 13px;transform:scale(0.9488,0.97);">Clines</div>
<div class="t" style="left:596.37px;top:134px;font-size:16px;transform-origin:0 13px;transform:scale(0.9302,0.97);">Shapes</div>
<div class="t" style="left:666.90px;top:134px;font-size:16px;transform-origin:0 13px;transform:scale(0.9031,0.97);">Rats</div>
<div class="t" style="left:209.82px;top:200px;font-size:16px;transform-origin:0 13px;transform:scale(0.9760,0.97);">[Net] 3_3V</div>
<div class="t" style="left:209.80px;top:245px;font-size:16px;transform-origin:0 13px;transform:scale(0.9955,0.97);">[Net] Gnd</div>
<div class="t" style="left:209.84px;top:290px;font-size:16px;transform-origin:0 13px;transform:scale(0.9643,0.97);">[Net] Int_Sensor</div>
<div class="t" style="left:209.80px;top:335px;font-size:16px;transform-origin:0 13px;transform:scale(0.9972,0.97);">[Net] Led1</div>
<div class="t" style="left:209.80px;top:380px;font-size:16px;transform-origin:0 13px;transform:scale(0.9972,0.97);">[Net] Led2</div>
<div class="t" style="left:209.80px;top:425px;font-size:16px;transform-origin:0 13px;transform:scale(0.9972,0.97);">[Net] Led3</div>
<div class="t" style="left:209.76px;top:470px;font-size:16px;transform-origin:0 13px;transform:scale(1.0382,0.97);">[Net] Mgnd</div>
<div class="t" style="left:209.78px;top:515px;font-size:16px;transform-origin:0 13px;transform:scale(1.0151,0.97);">[Net] N00793</div>
<div class="t" style="left:15.20px;top:571px;font-size:16px;transform-origin:0 13px;transform:scale(0.9704,0.97);">Available colors:</div>
<div class="t" style="left:681.61px;top:571px;font-size:16px;transform-origin:0 13px;transform:scale(0.9915,0.97);">Highlight unused colors</div>
<div class="t" style="left:857.06px;top:571px;font-size:16px;transform-origin:0 13px;transform:scale(0.9359,0.97);">Selected:</div>
<div class="t" style="left:49.90px;top:808px;font-size:16px;transform-origin:0 13px;transform:scale(0.9000,0.97);">OK</div>
<div class="t" style="left:138.57px;top:808px;font-size:16px;transform-origin:0 13px;transform:scale(0.9333,0.97);">Cancel</div>
<div class="t" style="left:243.30px;top:808px;font-size:16px;transform-origin:0 13px;transform:scale(0.9775,0.97);">Apply</div>
<div class="t" style="left:344.49px;top:808px;font-size:16px;transform-origin:0 13px;transform:scale(0.9122,0.97);">Reset</div>
<div class="t" style="left:573.74px;top:808px;font-size:16px;transform-origin:0 13px;transform:scale(0.9618,0.97);">Load</div>
<div class="t" style="left:674.27px;top:808px;font-size:16px;transform-origin:0 13px;transform:scale(0.9343,0.97);">Save</div>
<div class="t" style="left:920.81px;top:808px;font-size:16px;transform-origin:0 13px;transform:scale(0.9903,0.97);">Help</div>
<div class="t" style="left:829.41px;top:811px;font-size:16px;transform-origin:0 13px;transform:scale(0.9907,0.97);color:rgba(212,212,212,0.8);text-shadow:0 0 1.5px rgba(0,0,0,0.5)">CSDN @highman110</div>
</body></html>
